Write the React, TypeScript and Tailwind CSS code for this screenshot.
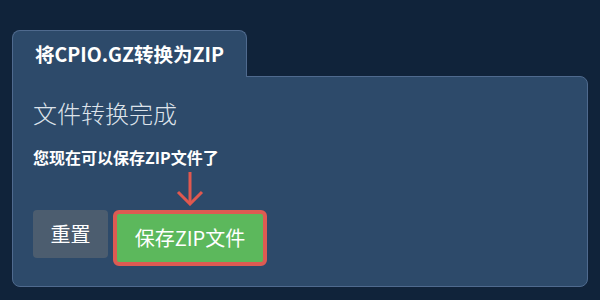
export default function App() {
  return (
    <div
      className="w-[600px] h-[300px] overflow-hidden bg-[#10233a] px-3 pt-[30px]"
      style={{ fontFamily: '"Noto Sans CJK SC", "Noto Sans", sans-serif' }}
    >
      {/* tab */}
      <div className="flex">
        <div className="relative z-10 -mb-px flex h-[47px] items-center rounded-t-lg border border-b-0 border-[#4f6a8e] bg-[#2d4a6a] px-[22px] text-[19.5px] font-bold text-white">
          将CPIO.GZ转换为ZIP
        </div>
      </div>

      {/* panel */}
      <div className="h-[211px] rounded-tr-lg rounded-b-lg border border-[#4f6a8e] bg-[#2d4a6a] px-5">
        <h2 className="mt-6 text-[24px] leading-none font-light text-[#dde3ea]">文件转换完成</h2>
        <p className="mt-6 text-[16px] leading-none font-bold text-white">您现在可以保存ZIP文件了</p>

        <div className="mt-[45px] flex items-start gap-[5px]">
          <button className="h-12 w-[75px] rounded bg-[#4c5d6f] text-[20px] text-white">重置</button>
          <div className="relative">
            <svg
              className="absolute -top-[38px] left-1/2 -translate-x-1/2"
              width="28"
              height="34"
              viewBox="0 0 28 34"
              fill="none"
              stroke="#e0584f"
              strokeWidth="3"
            >
              <line x1="14" y1="0" x2="14" y2="32" />
              <polyline points="2,20 14,32 26,20" />
            </svg>
            <button className="h-14 w-[154px] rounded-md border-4 border-[#dd5b52] bg-[#5cb85c] text-[20px] text-white">
              保存ZIP文件
            </button>
          </div>
        </div>
      </div>
    </div>
  );
}
